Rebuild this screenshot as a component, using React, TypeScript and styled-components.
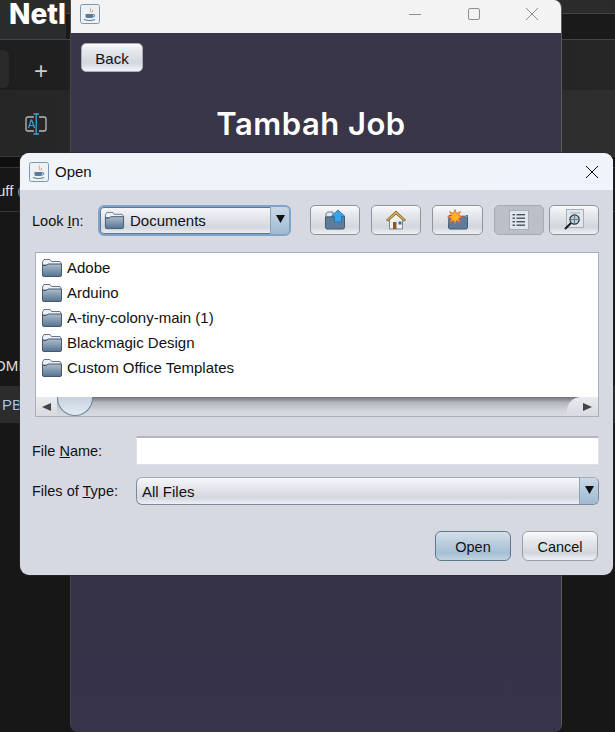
import React from "react";
import styled, { createGlobalStyle } from "styled-components";

const FOLDERS = ["Adobe", "Arduino", "A-tiny-colony-main (1)", "Blackmagic Design", "Custom Office Templates"];

const FolderIcon = ({ size = 22 }: { size?: number }) => (
  <svg width={size} height={size} viewBox="0 0 22 22">
    <defs>
      <linearGradient id="folderFront" x1="0" y1="0" x2="0" y2="1">
        <stop offset="0" stopColor="#aebdcc" />
        <stop offset="1" stopColor="#547391" />
      </linearGradient>
    </defs>
    <path d="M1.5 5 L3 2.5 H9 L10.5 4.5 H19 L20 6 V8 H1.5 Z" fill="#eef1f4" stroke="#66768a" strokeWidth="1" />
    <path d="M1.5 7.5 L1.5 18 Q1.5 19.5 3 19.5 H19 Q20.5 19.5 20.5 18 V7 H7 L5.5 8.5 H2 Z" fill="url(#folderFront)" stroke="#44586e" strokeWidth="1" />
  </svg>
);

const JavaIcon = () => (
  <svg width="20" height="20" viewBox="0 0 20 20">
    <rect x="0.5" y="0.5" width="19" height="19" rx="2" fill="#eef1f4" stroke="#7d97b0" />
    <path d="M10.5 3 C8.5 5 12 6 9.5 8.5 C12.5 7 10 5.5 10.5 3 Z" fill="#e2742a" />
    <path d="M12.5 5.5 C11.5 6.5 12.5 7.5 11 9 C13 8 13 7 12.5 5.5 Z" fill="#e2742a" />
    <path d="M5.5 10 H13 V12.5 Q13 14 11 14 H7.5 Q5.5 14 5.5 12.5 Z" fill="#5a7b9c" />
    <path d="M13 10.5 Q15.5 10.5 14.5 12.5 Q14 13 12.5 13" fill="none" stroke="#5a7b9c" />
    <path d="M4 15.5 Q9.5 17.5 15 15.5" fill="none" stroke="#5a7b9c" strokeWidth="1.2" />
  </svg>
);

const UpFolderIcon = () => (
  <svg width="22" height="22" viewBox="0 0 22 22">
    <path d="M2 5 L3.5 3 H9 V8 H2 Z" fill="#e4e8ee" stroke="#66768a" />
    <path d="M1.5 8 H12 L17 7 L20.5 7.5 V18 Q20.5 20 19 20 H3 Q1.5 20 1.5 18 Z" fill="#5f7d9b" stroke="#44586e" />
    <path d="M14 1 L21 7.5 H17.5 V13 H10.5 V7.5 L7 7.5 Z" fill="#3aa2e6" stroke="#1f6ea8" strokeWidth="0.8" />
  </svg>
);

const HomeIcon = () => (
  <svg width="22" height="22" viewBox="0 0 22 22">
    <path d="M4.5 10 V20 H17.5 V10 L11 4.5 Z" fill="#eef0f2" stroke="#7b8794" />
    <path d="M1.5 11 L11 2 L20.5 11 L18.8 12 L11 5 L3.2 12 Z" fill="#d8b458" stroke="#7c5d1c" strokeWidth="0.9" />
    <rect x="8" y="13" width="3.5" height="7" fill="#8a5a1f" />
    <rect x="13.5" y="12.5" width="3" height="3" fill="#3c6a9a" />
  </svg>
);

const NewFolderIcon = () => (
  <svg width="22" height="22" viewBox="0 0 22 22">
    <path d="M2 6.5 H20.5 V18 Q20.5 20 19 20 H3 Q1.5 20 1.5 18 Z" fill="#5f7d9b" stroke="#44586e" />
    <path d="M11 6.5 H19 L20 8" fill="none" stroke="#b6c1cd" />
    <path d="M8 0.5 L9.5 4.6 L13.5 2.5 L11.4 6.5 L15.5 8 L11.4 9.5 L13.5 13.5 L9.5 11.4 L8 15.5 L6.5 11.4 L2.5 13.5 L4.6 9.5 L0.5 8 L4.6 6.5 L2.5 2.5 L6.5 4.6 Z" fill="#fbb526" stroke="#e8552a" strokeWidth="0.7" />
  </svg>
);

const ListIcon = () => (
  <svg width="20" height="20" viewBox="0 0 20 20">
    <rect x="0.5" y="0.5" width="19" height="19" fill="#e2e6eb" stroke="#a6b0ba" />
    {[4, 7.5, 11, 14.5].map((y) => (
      <g key={y}>
        <rect x="3.5" y={y} width="2.5" height="1.4" fill="#46535f" />
        <rect x="7.5" y={y} width="8.5" height="1.4" fill="#46535f" />
      </g>
    ))}
  </svg>
);

const DetailsIcon = () => (
  <svg width="22" height="22" viewBox="0 0 22 22">
    <rect x="3.5" y="0.5" width="17" height="18" fill="#e3e7eb" stroke="#a6b0ba" />
    <path d="M7 4 H17 M14 8 H17 M15 12 H17" stroke="#a3adb7" />
    <circle cx="11.5" cy="10.5" r="4.6" fill="#b8cbd8" stroke="#26303a" strokeWidth="1.2" />
    <path d="M7 10.5 H16 M11.5 6 V15" stroke="#5d6f7f" strokeWidth="0.8" />
    <path d="M8 14 L2 20" stroke="#15191d" strokeWidth="2" />
  </svg>
);

const ArrowDown = () => (
  <svg width="9" height="8" viewBox="0 0 9 8">
    <path d="M0 0 H9 L4.5 8 Z" fill="#111" />
  </svg>
);

const CloseGlyph = ({ color, size }: { color: string; size: number }) => (
  <svg width={size} height={size} viewBox="0 0 12 12">
    <path d="M0 0 L12 12 M12 0 L0 12" stroke={color} strokeWidth="1" fill="none" />
  </svg>
);

const TranslateIcon = () => (
  <svg width="22" height="22" viewBox="0 0 22 22">
    <path d="M9 4 H3 Q1 4 1 6 V16 Q1 18 3 18 H9 M14 4 H19 Q21 4 21 6 V16 Q21 18 19 18 H14" fill="none" stroke="#b8b8b8" strokeWidth="1.3" />
    <path d="M8.5 1 H14 M11.2 1 V21 M8.5 21 H14" stroke="#3aa3e0" strokeWidth="1.3" fill="none" />
    <path d="M3.5 15 L6.2 7 H6.8 L9.5 15 M4.5 12.5 H8.5" stroke="#3aa3e0" strokeWidth="1.2" fill="none" />
  </svg>
);

export default function App() {
  return (
    <>
      <GlobalStyle />
      <Desktop>
        <Ide>
          <IdeTitleBar>
            <IdeLogo>Netl</IdeLogo>
            <IdeTitleRight />
          </IdeTitleBar>
          <IdeTabs>
            <IdeTab />
            <NewTab>+</NewTab>
          </IdeTabs>
          <IdeTools>
            <ToolSlot>
              <TranslateIcon />
            </ToolSlot>
          </IdeTools>
          <IdeGap />
          <IdeRow $height={44} $border>
            <IdeRowText $shift={-3}>uff (</IdeRowText>
          </IdeRow>
          <IdeSpacer />
          <IdeRow $height={41}>
            <IdeRowText $shift={-6}>OME</IdeRowText>
          </IdeRow>
          <IdeRow $height={37} $active>
            <IdeRowText $shift={2} $blue>
              PB(
            </IdeRowText>
          </IdeRow>
        </Ide>

        <BackWindow>
          <BackTitleBar>
            <JavaIcon />
            <WindowControls>
              <MinimizeGlyph />
              <MaximizeGlyph />
              <CloseGlyph color="#8e8e8e" size={12} />
            </WindowControls>
          </BackTitleBar>
          <BackBody>
            <BackButton>Back</BackButton>
            <BackTitle>Tambah Job</BackTitle>
          </BackBody>
        </BackWindow>

        <Dialog>
          <DialogTitleBar>
            <JavaIcon />
            <DialogTitle>Open</DialogTitle>
            <DialogClose>
              <CloseGlyph color="#111" size={12} />
            </DialogClose>
          </DialogTitleBar>
          <DialogBody>
            <LookInRow>
              <FieldLabel>
                Look <u>I</u>n:
              </FieldLabel>
              <LookInCombo>
                <ComboValue $inset={4}>
                  <FolderIcon size={21} />
                  <span>Documents</span>
                </ComboValue>
                <ComboArrow>
                  <ArrowDown />
                </ComboArrow>
              </LookInCombo>
              <Toolbar>
                <ToolButton $width={50}>
                  <UpFolderIcon />
                </ToolButton>
                <ToolButton $width={50}>
                  <HomeIcon />
                </ToolButton>
                <ToolButton $width={51}>
                  <NewFolderIcon />
                </ToolButton>
                <ToolButton $width={50} $pressed>
                  <ListIcon />
                </ToolButton>
                <ToolButton $width={50} $near>
                  <DetailsIcon />
                </ToolButton>
              </Toolbar>
            </LookInRow>

            <FileList>
              <FileItems>
                {FOLDERS.map((name) => (
                  <FileItem key={name}>
                    <FolderIcon />
                    <span>{name}</span>
                  </FileItem>
                ))}
              </FileItems>
              <ScrollBar>
                <ScrollEnd>
                  <ScrollArrow $dir="left" />
                </ScrollEnd>
                <ScrollThumb />
                <ScrollTrack />
                <ScrollCap>
                  <ScrollArrow $dir="right" />
                </ScrollCap>
              </ScrollBar>
            </FileList>

            <FormGrid>
              <FieldLabel>
                File <u>N</u>ame:
              </FieldLabel>
              <NameInput />
              <FieldLabel>
                Files of <u>T</u>ype:
              </FieldLabel>
              <TypeCombo>
                <ComboValue $inset={5}>All Files</ComboValue>
                <ComboArrow>
                  <ArrowDown />
                </ComboArrow>
              </TypeCombo>
            </FormGrid>

            <ActionRow>
              <ActionButton $primary>Open</ActionButton>
              <ActionButton>Cancel</ActionButton>
            </ActionRow>
          </DialogBody>
        </Dialog>
      </Desktop>
    </>
  );
}

const GlobalStyle = createGlobalStyle`
  * {
    box-sizing: border-box;
  }
  body, html, #root {
    margin: 0;
    padding: 0;
    height: 100%;
    overflow: hidden;
    font-family: "Liberation Sans", Arial, sans-serif;
  }
`;

const Desktop = styled.div`
  position: relative;
  width: 615px;
  height: 732px;
  overflow: hidden;
  background-color: #171717;
`;

const Ide = styled.div`
  display: flex;
  flex-direction: column;
  height: 100%;
`;

const IdeTitleBar = styled.div`
  height: 40px;
  display: flex;
  background: linear-gradient(#2b2b2b, #2a2d2d);
  border-bottom: 1px solid #444;
`;

const IdeLogo = styled.div`
  padding-left: 9px;
  font: 800 28px/28px "Inter", sans-serif;
  color: #fff;
`;

const IdeTitleRight = styled.div`
  flex: 1;
  margin-top: 13px;
  border-top: 1px solid #444;
  background-color: #1a1a1a;
`;

const IdeTabs = styled.div`
  height: 50px;
  display: flex;
  background: linear-gradient(90deg, #1e1e1e, #262626);
`;

const IdeTab = styled.div`
  width: 9px;
  height: 38px;
  margin-top: 10px;
  background-color: #2a2a2a;
  border-radius: 0 6px 6px 0;
`;

const NewTab = styled.div`
  width: 64px;
  padding-top: 12px;
  display: flex;
  align-items: center;
  justify-content: center;
  color: #ccc;
  font: 300 24px/1 "Liberation Sans", sans-serif;
`;

const IdeTools = styled.div`
  height: 67px;
  display: flex;
  align-items: center;
  background: linear-gradient(90deg, #262626, #2e2e2e);
  border-bottom: 1px solid #3a3a3a;
`;

const ToolSlot = styled.div`
  margin-top: 1px;
  padding-left: 25px;
  display: flex;
`;

const IdeGap = styled.div`
  height: 11px;
  background-color: #0f0f0f;
  border-bottom: 1px solid #333;
`;

const IdeRow = styled.div<{ $height: number; $border?: boolean; $active?: boolean }>`
  height: ${({ $height }) => $height}px;
  padding-top: ${({ $border }) => ($border ? "1px" : "0")};
  display: flex;
  align-items: center;
  overflow: hidden;
  background-color: ${({ $active }) => ($active ? "#2c2c2c" : "transparent")};
  border-bottom: ${({ $border }) => ($border ? "1px solid #3a3a3a" : "none")};
`;

const IdeRowText = styled.span<{ $shift?: number; $blue?: boolean }>`
  margin-left: ${({ $shift }) => $shift ?? 0}px;
  color: ${({ $blue }) => ($blue ? "#9cc8ee" : "#ddd")};
  font-size: 15px;
  white-space: nowrap;
`;

const IdeSpacer = styled.div`
  height: 133px;
`;

const BackWindow = styled.div`
  position: absolute;
  top: 0;
  left: 70px;
  width: 492px;
  height: 732px;
  display: flex;
  flex-direction: column;
  border-radius: 0 8px 8px 8px;
  border-right: 1px solid #5a5a60;
  border-left: 1px solid #46464c;
  overflow: hidden;
  background-color: #383549;
`;

const BackTitleBar = styled.div`
  height: 33px;
  flex-shrink: 0;
  padding: 4px 0 0 9px;
  display: flex;
  align-items: flex-start;
  justify-content: space-between;
  background-color: #f3f3f3;
`;

const WindowControls = styled.div`
  width: 152px;
  height: 20px;
  padding-right: 23px;
  display: flex;
  align-items: center;
  justify-content: space-between;
`;

const MinimizeGlyph = styled.span`
  width: 12px;
  height: 1px;
  background-color: #8e8e8e;
`;

const MaximizeGlyph = styled.span`
  width: 12px;
  height: 12px;
  border: 1px solid #8e8e8e;
  border-radius: 2px;
`;

const BackBody = styled.div`
  flex: 1;
  padding: 10px 10px 0;
  display: flex;
  flex-direction: column;
  background: linear-gradient(#393649 0, #36334a 100%);
`;

const BackButton = styled.button`
  width: 62px;
  height: 29px;
  padding: 1px 0 0;
  border: 1px solid #a9afb8;
  border-radius: 5px;
  background: linear-gradient(#fbfcfd 0, #e5e7ec 25%, #d3d7de 70%, #f2f4f6 100%);
  color: #111;
  font: 15px "Liberation Sans", sans-serif;
`;

const BackTitle = styled.h1`
  margin: 32px 10px 0 0;
  text-align: center;
  color: #fff;
  letter-spacing: 0.5px;
  font: 600 31px/40px "Inter", sans-serif;
`;

const Dialog = styled.div`
  position: absolute;
  top: 153px;
  left: 20px;
  width: 593px;
  height: 422px;
  display: flex;
  flex-direction: column;
  border-radius: 9px;
  overflow: hidden;
  background-color: #d6d9e2;
  box-shadow: 0 0 0 1px rgba(40, 40, 50, 0.6);
`;

const DialogTitleBar = styled.div`
  height: 37px;
  flex-shrink: 0;
  padding: 0 15px 0 9px;
  display: flex;
  align-items: center;
  gap: 6px;
  background: linear-gradient(90deg, #eff4f8, #eff3fb);
`;

const DialogTitle = styled.span`
  flex: 1;
  color: #111;
  font-size: 15px;
`;

const DialogClose = styled.span`
  display: flex;
`;

const DialogBody = styled.div`
  flex: 1;
  padding: 15px 14px 14px 12px;
  display: flex;
  flex-direction: column;
`;

const LookInRow = styled.div`
  display: flex;
  align-items: center;
  height: 31px;
`;

const FieldLabel = styled.label`
  color: #111;
  font-size: 14.5px;
  white-space: nowrap;
  ${LookInRow} & {
    width: 66px;
  }
`;

const ComboBase = styled.div`
  display: flex;
  overflow: hidden;
  border-radius: 6px;
  color: #111;
  font-size: 15px;
  background: linear-gradient(#f6f7f9 0, #e6e8ed 35%, #d3d7de 75%, #eef0f3 100%);
`;

const LookInCombo = styled(ComboBase)`
  width: 193px;
  height: 31px;
  border: 2px solid #7fa4cb;
  box-shadow: inset 0 0 0 1px #5d7890;
`;

const TypeCombo = styled(ComboBase)`
  height: 28px;
  border: 1px solid #7f8a99;
  border-top-color: #a4abb6;
`;

const ComboValue = styled.div<{ $inset: number }>`
  flex: 1;
  padding-left: ${({ $inset }) => $inset}px;
  display: flex;
  align-items: center;
  gap: 5px;
`;

const ComboArrow = styled.div`
  width: 19px;
  display: flex;
  align-items: center;
  justify-content: center;
  padding-bottom: 3px;
  border-left: 1px solid #8ba4bd;
  background: linear-gradient(#c9d8e6, #9fbad2);
`;

const Toolbar = styled.div`
  margin-left: 19px;
  align-self: flex-start;
  display: flex;
  gap: 11px;
`;

const ToolButton = styled.button<{ $width: number; $pressed?: boolean; $near?: boolean }>`
  width: ${({ $width }) => $width}px;
  height: 30px;
  padding: 0;
  margin-left: ${({ $near }) => ($near ? "-6px" : "0")};
  display: flex;
  align-items: center;
  justify-content: center;
  border: 1px solid ${({ $pressed }) => ($pressed ? "#a7abb3" : "#8f949b")};
  border-radius: 5px;
  background: ${({ $pressed }) =>
    $pressed ? "#bcbfc7" : "linear-gradient(#f9fafb 0, #e6e8ec 30%, #d2d6dd 75%, #eff1f4 100%)"};
`;

const FileList = styled.div`
  margin: 16px 0 0 3px;
  width: 564px;
  height: 165px;
  display: flex;
  flex-direction: column;
  border: 1px solid #a9aeb9;
  background-color: #fff;
`;

const FileItems = styled.div`
  flex: 1;
  padding: 2px 0 0 5px;
  display: flex;
  flex-direction: column;
`;

const FileItem = styled.div`
  height: 25px;
  display: flex;
  align-items: center;
  gap: 4px;
  color: #111;
  font-size: 15px;
  white-space: nowrap;
`;

const ScrollBar = styled.div`
  height: 19px;
  flex-shrink: 0;
  display: flex;
  background: linear-gradient(#707176 0, #b4b7bd 30%, #d0d3da 70%, #d8dbe1 100%);
`;

const ScrollEnd = styled.div`
  width: 21px;
  display: flex;
  align-items: center;
  justify-content: center;
  background: linear-gradient(#e9ebee, #d7dae0);
`;

const ScrollCap = styled(ScrollEnd)`
  width: 31px;
  padding-right: 6px;
  justify-content: flex-end;
  border-radius: 14px 0 0 0;
`;

const ScrollArrow = styled.span<{ $dir: "left" | "right" }>`
  width: 0;
  height: 0;
  border-top: 4px solid transparent;
  border-bottom: 4px solid transparent;
  border-left: ${({ $dir }) => ($dir === "right" ? "9px solid #444" : "none")};
  border-right: ${({ $dir }) => ($dir === "left" ? "9px solid #444" : "none")};
`;

const ScrollThumb = styled.div`
  width: 36px;
  height: 19px;
  border: 1px solid #6d87a3;
  border-top: none;
  border-radius: 0 0 18px 18px;
  background: linear-gradient(#c5d2df, #e4ebf1);
`;

const ScrollTrack = styled.div`
  flex: 1;
`;

const FormGrid = styled.div`
  margin-top: 19px;
  display: grid;
  grid-template-columns: 104px 463px;
  grid-template-rows: 29px 28px;
  row-gap: 12px;
  align-items: center;
`;

const NameInput = styled.div`
  height: 29px;
  background-color: #fff;
  border: 1px solid #dfe1e6;
  border-top: 2px solid #b3b6bd;
`;

const ActionRow = styled.div`
  margin-top: 26px;
  width: 566px;
  display: flex;
  justify-content: flex-end;
  gap: 11px;
`;

const ActionButton = styled.button<{ $primary?: boolean }>`
  width: 76px;
  height: 30px;
  padding: 1px 0 0;
  border: 1px solid ${({ $primary }) => ($primary ? "#5f7890" : "#9a9ea6")};
  border-radius: 6px;
  background: ${({ $primary }) =>
    $primary
      ? "linear-gradient(#d5e0ea 0, #bdcfdf 35%, #a6bfd5 75%, #c4d4e2 100%)"
      : "linear-gradient(#f9fafb 0, #e6e8ec 30%, #d2d6dd 75%, #eff1f4 100%)"};
  color: #111;
  font: 14.5px "Liberation Sans", sans-serif;
`;
